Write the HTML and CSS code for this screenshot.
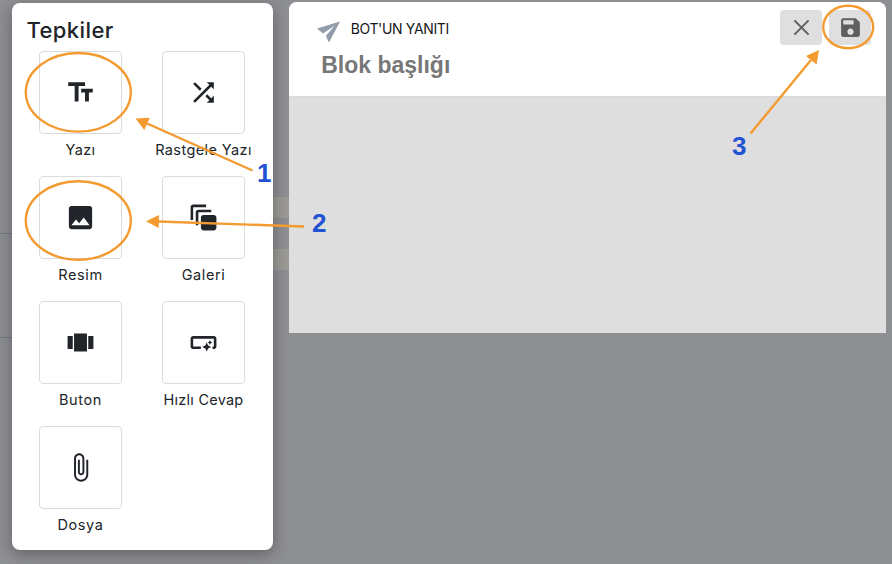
FILE: index.html
```html
<!DOCTYPE html>
<html lang="tr">
<head>
<meta charset="utf-8">
<title>Tepkiler</title>
<link rel="stylesheet" href="styles.css">
</head>
<body>
<main class="screen">
  <div class="backdrop" aria-hidden="true">
    <i class="rule rule-a"></i><i class="rule rule-b"></i>
    <i class="strip strip-a"></i><i class="strip strip-b"></i>
  </div>
  <aside class="panel">
    <h1>Tepkiler</h1>
    <div class="grid">
      <div class="item"><div class="tile"><svg viewBox="0 0 24 24"><path d="M2.5 4v3h5v12h3V7h5V4h-13zm19 5h-9v3h3v7h3v-7h3V9z"/></svg></div><span>Yazı</span></div>
      <div class="item"><div class="tile"><svg viewBox="0 0 24 24"><path d="M10.59 9.17L5.41 4 4 5.41l5.17 5.17 1.42-1.41zM14.5 4l2.04 2.04L4 18.59 5.41 20 17.96 7.46 20 9.5V4h-5.5zm.33 9.41l-1.41 1.41 3.13 3.13L14.5 20H20v-5.5l-2.04 2.04-3.13-3.13z"/></svg></div><span>Rastgele Yazı</span></div>
      <div class="item"><div class="tile"><svg viewBox="0 0 24 24"><path d="M21 19V5c0-1.100-.9-2-2-2H5c-1.100 0-2 .9-2 2v14c0 1.100.9 2 2 2h14c1.100 0 2-.9 2-2zM8.500 13.500l2.500 3.010L14.500 12l4.500 6H5l3.500-4.500z"/></svg></div><span class="wide">Resim</span></div>
      <div class="item"><div class="tile"><svg viewBox="0 0 24 24"><path d="M14 2H4c-1.100 0-2 .9-2 2v10h2V4h10V2zm4 4H8c-1.100 0-2 .9-2 2v10h2V8h10V6zm2 4h-8c-1.100 0-2 .9-2 2v8c0 1.100.9 2 2 2h8c1.100 0 2-.9 2-2v-8c0-1.100-.9-2-2-2z"/></svg></div><span class="wide">Galeri</span></div>
      <div class="item"><div class="tile"><svg viewBox="0 0 24 24"><path d="M2 7h4v10H2V7zm5 12h10V5H7v14zM18 7h4v10h-4V7z"/></svg></div><span class="wide">Buton</span></div>
      <div class="item"><div class="tile"><svg viewBox="0 0 24 24"><path d="M22 9v6c0 1.100-.9 2-2 2h-1v-2h1V9H4v6h6v2H4c-1.100 0-2-.9-2-2V9c0-1.100.9-2 2-2h16c1.100 0 2 .9 2 2zm-7.500 10 1.090-2.410L18 15.500l-2.410-1.090L14.500 12l-1.090 2.410L11 15.500l2.410 1.090L14.500 19zm2.500-5 .62-1.380L19 12l-1.380-.62L17 10l-.62 1.380L15 12l1.380.62L17 14z"/></svg></div><span class="snug">Hızlı Cevap</span></div>
      <div class="item"><div class="tile"><svg viewBox="0 0 24 24"><path d="M16.500 6v11.500c0 2.210-1.790 4-4 4s-4-1.790-4-4V5c0-1.380 1.120-2.500 2.500-2.500s2.500 1.120 2.500 2.500v10.500c0 .55-.45 1-1 1s-1-.45-1-1V6H10v9.500c0 1.380 1.120 2.500 2.500 2.500s2.500-1.120 2.500-2.500V5c0-2.210-1.790-4-4-4S7 2.790 7 5v12.500c0 3.040 2.460 5.500 5.500 5.500s5.500-2.460 5.500-5.500V6h-1.500z"/></svg></div><span class="wide">Dosya</span></div>
    </div>
  </aside>
  <section class="card">
    <header>
      <div class="heading">
        <div class="eyebrow"><svg class="plane" viewBox="0 0 24 22"><path d="M0 7.500 23 0.500 12 21.500 8.800 15 17.500 4.800 6 12.500Z"/></svg><span>BOT'UN YANITI</span></div>
        <h2>Blok başlığı</h2>
      </div>
      <div class="actions">
        <button aria-label="Kapat"><svg viewBox="0 0 24 24"><path d="M5.200 5.200 18.800 18.800M18.800 5.200 5.200 18.800" fill="none" stroke="#5f5f5f" stroke-width="1.900"/></svg></button>
        <button aria-label="Kaydet"><svg viewBox="0 0 24 24"><path d="M17 3H5c-1.110 0-2 .9-2 2v14c0 1.100.89 2 2 2h14c1.100 0 2-.9 2-2V7l-4-4zm-5 16c-1.660 0-3-1.340-3-3s1.340-3 3-3 3 1.340 3 3-1.340 3-3 3zm3-10H5V5h10v4z"/></svg></button>
      </div>
    </header>
  </section>
  <svg class="notes" viewBox="0 0 892 564">
    <g fill="none" stroke="#f39a31" stroke-width="2.400">
      <ellipse cx="78.300" cy="92.300" rx="52.500" ry="39.300"/>
      <ellipse cx="78.300" cy="220.500" rx="52.500" ry="39.300"/>
      <ellipse cx="848.200" cy="27" rx="25" ry="21.200"/>
      <path d="M252.500 170.500 146 123M304 226.500 158 221.500M750.500 133.500 811 60"/>
    </g>
    <path fill="#f39a31" d="M135.500 118.500 149.800 117.700 144.300 130ZM146 221.300 159 215 158.700 228ZM819 50 816.500 64.500 806 56Z"/>
    <g class="num"><text x="257" y="182">1</text><text x="312" y="232">2</text><text x="732" y="155">3</text></g>
  </svg>
</main>
</body>
</html>
```
FILE: styles.css
```css
* { box-sizing: border-box; }
body { margin: 0; font-family: Inter, "Open Sans", sans-serif; color: #212529; }
.screen { position: relative; display: flex; width: 892px; height: 564px; overflow: hidden; background: #8e8f93; }
.backdrop { position: absolute; inset: 0; }
.rule, .strip { position: absolute; }
.rule { left: 0; width: 12px; height: 1px; background: #737983; }
.rule-a { top: 233px; }
.rule-b { top: 337px; }
.strip { left: 270px; width: 19px; height: 21px; background: #9b9a96; }
.strip-a { top: 197px; }
.strip-b { top: 249px; }
.panel { position: relative; width: 260.500px; height: 547px; margin: 3.400px 0 0 12px; padding: 13px 27px 0; border-radius: 8px; background: #fff; box-shadow: 0 4px 16px rgba(0, 0, 0, .32); }
h1 { margin: 0 0 7px -12.500px; font-size: 22px; line-height: 28px; font-weight: 500; letter-spacing: .4px; white-space: nowrap; }
.grid { display: grid; grid-template-columns: 83px 83px; column-gap: 40px; grid-auto-rows: 125px; }
.item { display: flex; flex-direction: column; align-items: center; white-space: nowrap; font-size: 14.500px; line-height: 20px; letter-spacing: .4px; }
.wide { letter-spacing: .6px; }
.snug { letter-spacing: .25px; }
.tile { display: flex; align-items: center; justify-content: center; width: 83.500px; height: 83px; flex: none; margin-top: -.1px; margin-bottom: 6px; border: 1px solid #dcdcdd; border-radius: 4px; }
.tile svg { width: 31px; height: 31px; fill: #212529; }
.card { position: relative; width: 596.500px; height: 331px; margin: 2px 0 0 16.700px; border-radius: 8px 8px 0 0; overflow: hidden; background: #dedede; }
header { display: flex; justify-content: space-between; height: 94.500px; padding: 7.500px 14.500px 0 28px; background: #fff; border-bottom: 1px solid #d9d9d9; }
.eyebrow { display: flex; align-items: center; height: 37px; gap: 9.500px; color: #16181b; font-size: 14px; letter-spacing: -.35px; white-space: nowrap; }
.plane { width: 24px; height: 22px; fill: #929dac; margin-top: 7px; }
h2 { margin: 3px 0 0 4px; font: bold 23px/30px "Liberation Sans", sans-serif; color: #777; white-space: nowrap; }
.actions { display: flex; gap: 7px; }
button { display: flex; align-items: center; justify-content: center; width: 42px; height: 35.500px; padding: 0; border: 0; border-radius: 4px; background: #dfdfdf; }
button svg { width: 25px; height: 25px; fill: #5f5f5f; }
.notes { position: absolute; inset: 0; width: 892px; height: 564px; }
.num { font: bold 26px "Liberation Sans", sans-serif; fill: #2253d3; }
```
